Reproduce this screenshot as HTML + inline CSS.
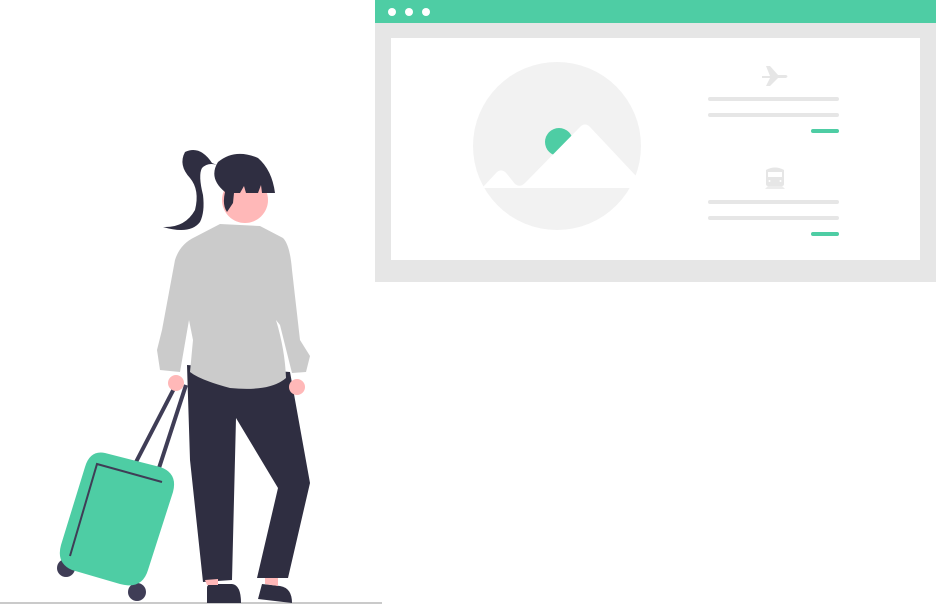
<!DOCTYPE html>
<html><head><style>html,body{margin:0;padding:0;background:#fff;width:936px;height:604px;overflow:hidden}</style></head><body>
<svg width="936" height="604" viewBox="0 0 936 604" xmlns="http://www.w3.org/2000/svg">
<rect x="375" y="0" width="561" height="282" fill="#e6e6e6"/>
<rect x="375" y="0" width="561" height="23" fill="#4ecda4"/>
<circle cx="392" cy="12" r="4" fill="#fff"/><circle cx="409" cy="12" r="4" fill="#fff"/><circle cx="426" cy="12" r="4" fill="#fff"/>
<rect x="391" y="38" width="529" height="222" fill="#fff"/>
<circle cx="557" cy="146" r="84" fill="#f2f2f2"/>
<circle cx="559" cy="142" r="14" fill="#4ecda4"/>
<path d="M483,187 L497,172 Q502,168 507,174 L515,184 Q520,188 525,183 L580,127 Q585,122 590,127 L636,176 L636,188 L483,188 Z" fill="#fff"/>
<path d="M762,76 L770,76 L766,66 L770,66 L778,75 L786,75 Q789,76 786,78 L778,78 L770,86 L766,86 L770,78 L762,78 Z" fill="#e6e6e6"/>
<rect x="708" y="97" width="131" height="4" rx="2" fill="#e6e6e6"/>
<rect x="708" y="113" width="131" height="4" rx="2" fill="#e6e6e6"/>
<rect x="811" y="129" width="28" height="4" rx="2" fill="#4ecda4"/>
<path d="M766,170 Q775,165 784,170 L784,184 Q784,186 782,186 L768,186 Q766,186 766,184 Z" fill="#e6e6e6"/>
<rect x="768" y="172" width="14" height="5" fill="#fff"/>
<circle cx="769.5" cy="181" r="1" fill="#fff"/><circle cx="780.5" cy="181" r="1" fill="#fff"/>
<path d="M768,186 L782,186 L785,189 L765,189 Z" fill="#ececec"/>
<rect x="708" y="200" width="131" height="4" rx="2" fill="#e6e6e6"/>
<rect x="708" y="216" width="131" height="4" rx="2" fill="#e6e6e6"/>
<rect x="811" y="232" width="28" height="4" rx="2" fill="#4ecda4"/>
<rect x="0" y="602" width="382" height="2" fill="#cacaca"/>
<line x1="180" y1="377" x2="136" y2="462" stroke="#3f3d56" stroke-width="4"/>
<line x1="186" y1="385" x2="159" y2="468" stroke="#3f3d56" stroke-width="4"/>
<circle cx="66" cy="568" r="9" fill="#3f3d56"/><circle cx="137" cy="592" r="9" fill="#3f3d56"/>
<path d="M105,453 L160,467 Q178,473 173,492 L148,570 Q142,590 120,584 L72,570 Q56,563 61,545 L85,467 Q90,450 105,453 Z" fill="#4ecda4"/>
<path d="M70,556 L97,464 L162,482" fill="none" stroke="#3f3d56" stroke-width="2"/>
<path d="M187,365 L290,372 L310,483 L288,578 L257,578 L278,488 L236,418 L232,580 L203,582 L190,460 Z" fill="#2f2e41"/>
<path d="M207,588 Q207,584 212,584 L232,584 Q241,585 241,603 L207,603 Z" fill="#2f2e41"/>
<path d="M262,584 L280,586 Q292,588 292,603 L258,599 Z" fill="#2f2e41"/>
<path d="M205,580 L218,579 L218,585 L207,585Z M265,578 L278,578 L278,586 L265,584Z" fill="#ffb8b8"/>
<circle cx="176" cy="383" r="8" fill="#ffb8b8"/><circle cx="297" cy="387" r="8" fill="#ffb8b8"/>
<path d="M220,224 L260,226 L283,238 Q290,245 292,270 L300,340 L310,356 L306,372 L292,373 L280,325 L276,320 Q285,350 286,378 Q270,392 230,388 Q200,380 190,372 L193,340 L189,320 L180,372 L160,370 L157,350 L162,330 L175,260 Q180,244 195,237 Z" fill="#cbcbcb"/>
<circle cx="245" cy="200" r="23" fill="#ffb8b8"/>
<path d="M225,192 Q208,178 218,162 Q235,148 258,158 Q272,170 275,193 L262,193 L261,185 L258,193 L246,193 L244,186 L240,193 L234,193 L233,203 L227,212 Q222,205 225,192 Z" fill="#2f2e41"/>
<path d="M212,163 Q200,145 185,152 Q178,165 190,178 Q200,190 195,210 Q185,228 163,227 Q190,235 200,222 Q205,212 203,195 Q198,175 202,168 Q208,162 217,165 Z" fill="#2f2e41"/>
</svg>
</body></html>
